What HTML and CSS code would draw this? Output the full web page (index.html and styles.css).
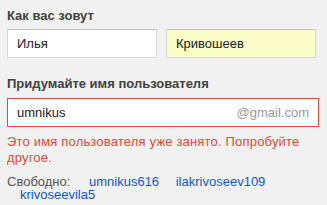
FILE: index.html
```html
<!DOCTYPE html>
<html lang="ru">
  <head>
    <meta charset="UTF-8" />
    <title>Регистрация</title>
    <link rel="stylesheet" href="styles.css">
  </head>
  <body>
    <div class="form">
      <div class="form-group">
        <label class="label">Как вас зовут</label>
        <div class="name-row">
          <input type="text" class="field" value="Илья" />
          <input type="text" class="field field-filled" value="Кривошеев" />
        </div>
      </div>

      <div class="form-group">
        <label class="label label-user">Придумайте имя пользователя</label>
        <div class="field field-error username">
          <span class="username-value">umnikus</span>
          <span class="domain">@gmail.com</span>
        </div>
        <div class="error-text">Это имя пользователя уже занято. Попробуйте другое.</div>
        <div class="suggestions">
          <span class="free">Свободно:</span>
          <a href="#" class="suggest suggest-first">umnikus616</a>
          <a href="#" class="suggest">ilakrivoseev109</a>
          <a href="#" class="suggest">krivoseevila5</a>
        </div>
      </div>
    </div>
  </body>
</html>
```

FILE: styles.css
```css
body {
  margin: 0;
  background-color: #f1f1f1;
  font-family: "Liberation Sans", Arial, sans-serif;
  color: #222;
}

.form {
  padding: 7px 8px 0 7px;
  width: 312px;
}

.form-group {
  margin-bottom: 18px;
}

.form-group:last-child {
  margin-bottom: 0;
}

.label {
  display: block;
  font-size: 13px;
  line-height: 15px;
  font-weight: bold;
  color: #404040;
  margin: 1px 0 6px;
}

.label-user {
  margin-bottom: 7px;
}

.name-row {
  display: flex;
  gap: 9px;
}

.field {
  box-sizing: border-box;
  width: 150px;
  height: 29px;
  margin: 0;
  padding: 0 9px;
  border: 1px solid #d9d9d9;
  border-top-color: #c0c0c0;
  background-color: #fff;
  font-family: "Liberation Sans", Arial, sans-serif;
  font-size: 13px;
  color: #222;
  outline: none;
}

.field-filled {
  background-color: #fafdc8;
}

.field-error {
  border: 1px solid #dd4b39;
}

.username {
  width: 312px;
  display: flex;
  align-items: center;
  justify-content: space-between;
}

.domain {
  color: #999;
}

.error-text {
  margin-top: 7px;
  font-size: 13px;
  line-height: 16px;
  letter-spacing: 0.18px;
  color: #dd4b39;
}

.suggestions {
  margin-top: 9px;
  font-size: 13px;
  line-height: 13px;
  color: #555;
}

.suggest {
  display: inline-block;
  margin-left: 13px;
  color: #1155cc;
  text-decoration: none;
}

.suggest-first {
  margin-left: 15px;
}
```
